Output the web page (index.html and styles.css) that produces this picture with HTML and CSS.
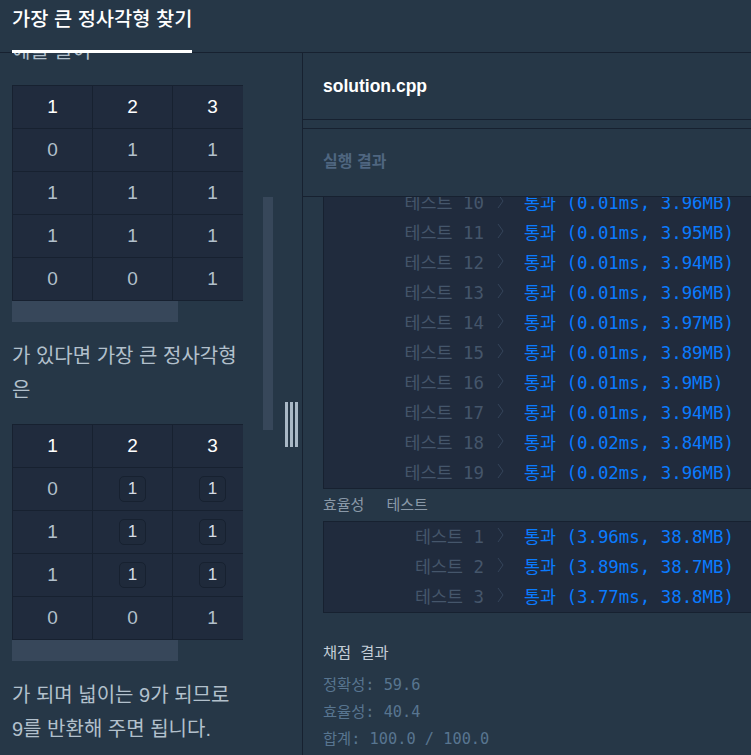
FILE: index.html
```html
<!DOCTYPE html>
<html lang="ko">
<head>
<meta charset="utf-8">
<title>가장 큰 정사각형 찾기</title>
<link rel="stylesheet" href="styles.css">
</head>
<body>
<header class="topbar">
  <div class="tab">가장 큰 정사각형 찾기</div>
</header>
<main class="layout">
  <section class="left">
    <div class="desc">
      <p class="para lead">예를 들어</p>
      <div class="table-wrap">
        <div class="grid">
          <div class="cell head">1</div><div class="cell head">2</div><div class="cell head">3</div><div class="cell head">4</div>
          <div class="cell">0</div><div class="cell">1</div><div class="cell">1</div><div class="cell">1</div>
          <div class="cell">1</div><div class="cell">1</div><div class="cell">1</div><div class="cell">1</div>
          <div class="cell">1</div><div class="cell">1</div><div class="cell">1</div><div class="cell">1</div>
          <div class="cell">0</div><div class="cell">0</div><div class="cell">1</div><div class="cell">0</div>
        </div>
      </div>
      <div class="hscroll"></div>
      <p class="para">가 있다면 가장 큰 정사각형<br>은</p>
      <div class="table-wrap">
        <div class="grid">
          <div class="cell head">1</div><div class="cell head">2</div><div class="cell head">3</div><div class="cell head">4</div>
          <div class="cell">0</div><div class="cell"><span class="hl">1</span></div><div class="cell"><span class="hl">1</span></div><div class="cell"><span class="hl">1</span></div>
          <div class="cell">1</div><div class="cell"><span class="hl">1</span></div><div class="cell"><span class="hl">1</span></div><div class="cell"><span class="hl">1</span></div>
          <div class="cell">1</div><div class="cell"><span class="hl">1</span></div><div class="cell"><span class="hl">1</span></div><div class="cell"><span class="hl">1</span></div>
          <div class="cell">0</div><div class="cell">0</div><div class="cell">1</div><div class="cell">0</div>
        </div>
      </div>
      <div class="hscroll"></div>
      <p class="para">가 되며 넓이는 9가 되므로<br>9를 반환해 주면 됩니다.</p>
    </div>
    <div class="vscroll"><div class="vthumb"></div></div>
    <div class="gutter">
      <div class="handle"><span></span><span></span><span></span></div>
    </div>
  </section>

  <section class="right">
    <div class="file-bar">solution.cpp</div>
    <div class="spacer"></div>
    <div class="run-bar">실행 결과</div>
    <div class="console">
      <div class="box first">
        <div class="row"><span class="t">테스트 10</span><svg class="chev" viewBox="0 0 7 16"><path d="M1 1 L6 8 L1 15"/></svg><span class="r">통과 (0.01ms, 3.96MB)</span></div>
        <div class="row"><span class="t">테스트 11</span><svg class="chev" viewBox="0 0 7 16"><path d="M1 1 L6 8 L1 15"/></svg><span class="r">통과 (0.01ms, 3.95MB)</span></div>
        <div class="row"><span class="t">테스트 12</span><svg class="chev" viewBox="0 0 7 16"><path d="M1 1 L6 8 L1 15"/></svg><span class="r">통과 (0.01ms, 3.94MB)</span></div>
        <div class="row"><span class="t">테스트 13</span><svg class="chev" viewBox="0 0 7 16"><path d="M1 1 L6 8 L1 15"/></svg><span class="r">통과 (0.01ms, 3.96MB)</span></div>
        <div class="row"><span class="t">테스트 14</span><svg class="chev" viewBox="0 0 7 16"><path d="M1 1 L6 8 L1 15"/></svg><span class="r">통과 (0.01ms, 3.97MB)</span></div>
        <div class="row"><span class="t">테스트 15</span><svg class="chev" viewBox="0 0 7 16"><path d="M1 1 L6 8 L1 15"/></svg><span class="r">통과 (0.01ms, 3.89MB)</span></div>
        <div class="row"><span class="t">테스트 16</span><svg class="chev" viewBox="0 0 7 16"><path d="M1 1 L6 8 L1 15"/></svg><span class="r">통과 (0.01ms, 3.9MB)</span></div>
        <div class="row"><span class="t">테스트 17</span><svg class="chev" viewBox="0 0 7 16"><path d="M1 1 L6 8 L1 15"/></svg><span class="r">통과 (0.01ms, 3.94MB)</span></div>
        <div class="row"><span class="t">테스트 18</span><svg class="chev" viewBox="0 0 7 16"><path d="M1 1 L6 8 L1 15"/></svg><span class="r">통과 (0.02ms, 3.84MB)</span></div>
        <div class="row"><span class="t">테스트 19</span><svg class="chev" viewBox="0 0 7 16"><path d="M1 1 L6 8 L1 15"/></svg><span class="r">통과 (0.02ms, 3.96MB)</span></div>
      </div>
      <div class="sub">효율성  테스트</div>
      <div class="box">
        <div class="row"><span class="t">테스트 1</span><svg class="chev" viewBox="0 0 7 16"><path d="M1 1 L6 8 L1 15"/></svg><span class="r">통과 (3.96ms, 38.8MB)</span></div>
        <div class="row"><span class="t">테스트 2</span><svg class="chev" viewBox="0 0 7 16"><path d="M1 1 L6 8 L1 15"/></svg><span class="r">통과 (3.89ms, 38.7MB)</span></div>
        <div class="row"><span class="t">테스트 3</span><svg class="chev" viewBox="0 0 7 16"><path d="M1 1 L6 8 L1 15"/></svg><span class="r">통과 (3.77ms, 38.8MB)</span></div>
      </div>
      <div class="score">
        <div class="score-title">채점 결과</div>
        <div class="score-line">정확성: 59.6</div>
        <div class="score-line">효율성: 40.4</div>
        <div class="score-line">합계: 100.0 / 100.0</div>
      </div>
    </div>
  </section>
</main>
</body>
</html>
```

FILE: styles.css
```css
* { box-sizing: border-box; }

html, body {
  margin: 0;
  padding: 0;
  width: 751px;
  height: 755px;
  overflow: hidden;
  background: #263747;
  font-family: "Liberation Sans", "Noto Sans CJK KR", sans-serif;
}

/* top bar */
.topbar {
  height: 53px;
  border-bottom: 1px solid #172130;
  padding-left: 12px;
  display: flex;
  align-items: flex-start;
  background: #263747;
}
.tab {
  height: 53px;
  margin-bottom: -1px;
  padding-top: 4px;
  line-height: 28px;
  border-bottom: 3px solid #ffffff;
  color: #ffffff;
  font-family: "Noto Sans CJK KR", sans-serif;
  font-size: 19.8px;
  font-weight: 500;
  white-space: nowrap;
  position: relative;
  z-index: 1;
}

.layout {
  display: grid;
  grid-template-columns: 302px 1fr;
  height: 702px;
}

/* left side */
.left {
  display: flex;
  overflow: hidden;
}
.desc {
  flex: none;
  width: 243px;
  padding-left: 12px;
  overflow: hidden;
}
.para {
  margin: 17px 0;
  font-size: 20px;
  line-height: 34px;
  color: #b2c0cc;
  white-space: nowrap;
}
.para.lead { margin-top: -19px; }

.table-wrap {
  width: 231px;
  overflow: hidden;
}
.grid {
  width: 321px;
  display: grid;
  grid-template-columns: repeat(4, 80px);
  border-top: 1px solid #172130;
  border-left: 1px solid #172130;
  background: #202b3d;
}
.cell {
  height: 43px;
  border-right: 1px solid #172130;
  border-bottom: 1px solid #172130;
  display: flex;
  align-items: center;
  justify-content: center;
  font-size: 19px;
  color: #b2c0cc;
}
.cell.head { color: #ffffff; }
.hl {
  width: 27px;
  height: 26px;
  border: 1px solid #172130;
  border-radius: 5px;
  display: inline-flex;
  align-items: center;
  justify-content: center;
  font-size: 17px;
  color: #d5dce4;
  background: #1f2a3b;
}
.hscroll {
  width: 166px;
  height: 21px;
  background: #37475a;
}

.vscroll {
  flex: none;
  width: 10px;
  margin-left: 20px;
}
.vthumb {
  margin-top: 144px;
  height: 233px;
  background: #37475a;
}
.gutter {
  flex: none;
  width: 29px;
}
.handle {
  margin-top: 349px;
  margin-left: 12px;
  display: flex;
  gap: 2px;
  height: 45px;
}
.handle span {
  width: 3px;
  height: 45px;
  background: #a9b8c6;
}

/* right side */
.right {
  border-left: 1px solid #172130;
  display: flex;
  flex-direction: column;
  overflow: hidden;
}
.file-bar {
  height: 67px;
  border-bottom: 1px solid #172130;
  padding-left: 20px;
  display: flex;
  align-items: center;
  font-family: "Liberation Sans", sans-serif;
  font-weight: 700;
  font-size: 17.5px;
  color: #ffffff;
  flex: none;
}
.spacer {
  height: 9px;
  border-bottom: 1px solid #172130;
  flex: none;
}
.run-bar {
  height: 68px;
  border-bottom: 1px solid #172130;
  padding-left: 20px;
  padding-bottom: 6px;
  display: flex;
  align-items: center;
  font-family: "Noto Sans CJK KR", sans-serif;
  font-weight: 700;
  font-size: 16px;
  color: #4f6680;
  flex: none;
}
.console {
  flex: 1;
  overflow: hidden;
  padding-left: 20px;
  font-family: "DejaVu Sans Mono", "Noto Sans CJK KR", monospace;
}
.box {
  background: #202b3d;
  border: 1px solid #172130;
  border-right: none;
}
.box.first { margin-top: -10px; }
.row {
  height: 30px;
  padding-bottom: 4px;
  display: flex;
  align-items: center;
  font-size: 17.4px;
  white-space: pre;
}
.t {
  width: 160px;
  text-align: right;
  color: #45566b;
  flex: none;
}
.chev {
  width: 7px;
  height: 16px;
  margin-left: 13px;
  flex: none;
}
.chev path {
  fill: none;
  stroke: #34445a;
  stroke-width: 1;
}
.r {
  margin-left: 20px;
  color: #0a7bff;
}
.sub {
  height: 32px;
  line-height: 32px;
  font-size: 15px;
  color: #8a99a8;
  white-space: pre;
  word-spacing: 2px;
}
.score {
  margin-top: 27px;
  font-size: 15.3px;
  line-height: 27px;
}
.score-title {
  color: #c4ced8;
  margin-bottom: 5px;
  white-space: pre;
}
.score-line {
  color: #587590;
  white-space: pre;
}
```
